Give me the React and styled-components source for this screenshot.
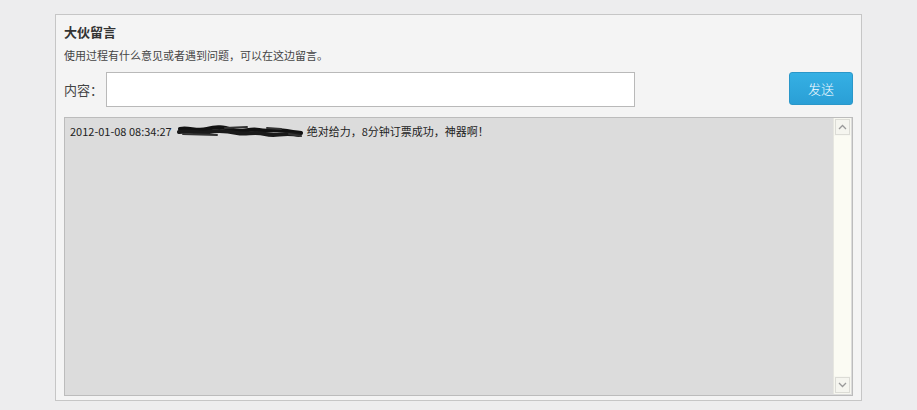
import React from 'react'
import styled, { createGlobalStyle } from 'styled-components'

const GlobalStyle = createGlobalStyle`
    html, body {
        margin: 0;
        padding: 0;
        background: #ededee;
    }
    body {
        font-family: "Noto Sans CJK SC", "Liberation Sans", sans-serif;
        color: #333;
    }
`

const messages = [
    {
        time: '2012-01-08 08:34:27',
        text: '绝对给力，8分钟订票成功，神器啊！',
    },
]

// the user name is scribbled over in the screenshot
const Scribble = () => (
    <svg width="126" height="14" viewBox="0 0 126 14">
        <path
            d="M3 5 C12 3 20 8 30 5 S46 3 56 6 S72 4 82 6 S98 5 110 7 S120 8 124 9"
            stroke="#111" strokeWidth="4" fill="none" strokeLinecap="round"
        />
        <path
            d="M2 8 C12 6 22 10 32 8 S50 7 60 9 S76 7 88 10 S104 8 122 11"
            stroke="#1a1a1a" strokeWidth="4" fill="none" strokeLinecap="round"
        />
        <path
            d="M6 10 L40 11 M48 4 L70 3 M90 4 L104 5 M112 10 L124 12"
            stroke="#333" strokeWidth="2" strokeLinecap="round"
        />
    </svg>
)

const Arrow = ({ up }) => (
    <svg width="9" height="6" viewBox="0 0 9 6">
        <path d={up ? 'M1 5 L4.5 1.5 L8 5' : 'M1 1 L4.5 4.5 L8 1'} stroke="#9a9a9a" strokeWidth="1.3" fill="none" />
    </svg>
)

const App = () => {
    return (
        <Page>
            <GlobalStyle />
            <Panel>
                <Title>大伙留言</Title>
                <Desc>使用过程有什么意见或者遇到问题，可以在这边留言。</Desc>
                <Row>
                    <Label>内容：</Label>
                    <Input type="text" />
                    <SendButton>发送</SendButton>
                </Row>
                <Board>
                    <List>
                        {messages.map((item, index) => (
                            <Message key={index}>
                                <span className="time">{item.time}</span>
                                <span className="user"><Scribble /></span>
                                <span>{item.text}</span>
                            </Message>
                        ))}
                    </List>
                    <ScrollBar>
                        <ScrollButton><Arrow up /></ScrollButton>
                        <Track />
                        <ScrollButton><Arrow /></ScrollButton>
                    </ScrollBar>
                </Board>
            </Panel>
        </Page>
    )
}

const Page = styled.div`
    padding: 14px 0 0 55px;
    height: 410px;
    box-sizing: border-box;
`
const Panel = styled.div`
    width: 807px;
    box-sizing: border-box;
    border: 1px solid #c6c6c6;
    background: #f4f4f4;
    padding: 8px 8px 4px 8px;
`
const Title = styled.div`
    font-size: 13px;
    font-weight: bold;
    line-height: 18px;
    color: #333;
`
const Desc = styled.div`
    margin-top: 6px;
    font-size: 11px;
    line-height: 16px;
    color: #444;
`
const Row = styled.div`
    margin-top: 9px;
    display: flex;
    align-items: flex-start;
`
const Label = styled.div`
    width: 42px;
    font-size: 13px;
    line-height: 35px;
    color: #444;
`
const Input = styled.input`
    width: 529px;
    height: 35px;
    box-sizing: border-box;
    border: 1px solid #b9b9b9;
    background: #fff;
    outline: none;
    padding: 0 6px;
`
const SendButton = styled.button`
    margin-left: auto;
    width: 64px;
    height: 33px;
    border: 1px solid #2a97c9;
    border-radius: 3px;
    background: linear-gradient(#35b0e4, #2a9fd6);
    color: #f4fbff;
    font-family: inherit;
    font-size: 13px;
    font-weight: 300;
    padding: 0;
`
const Board = styled.div`
    margin-top: 10px;
    height: 279px;
    box-sizing: border-box;
    border: 1px solid #bcbcbc;
    background: #dcdcdc;
    display: flex;
`
const List = styled.div`
    flex: 1;
    padding: 5px 5px;
`
const Message = styled.div`
    display: flex;
    align-items: center;
    font-size: 11px;
    line-height: 16px;
    color: #222;
    .time{
        margin-right: 5px;
    }
    .user{
        display: flex;
        margin-right: 4px;
    }
`
const ScrollBar = styled.div`
    width: 17px;
    margin: 0 1px 1px 0;
    display: flex;
    flex-direction: column;
    background: #f7f7f0;
    border-left: 1px solid #e6e6e0;
`
const ScrollButton = styled.div`
    height: 16px;
    box-sizing: border-box;
    margin: 1px 1px;
    border: 1px solid #dcdcd6;
    background: #f5f5ef;
    display: flex;
    align-items: center;
    justify-content: center;
`
const Track = styled.div`
    flex: 1;
    background: #fbfbf3;
`

export default App
